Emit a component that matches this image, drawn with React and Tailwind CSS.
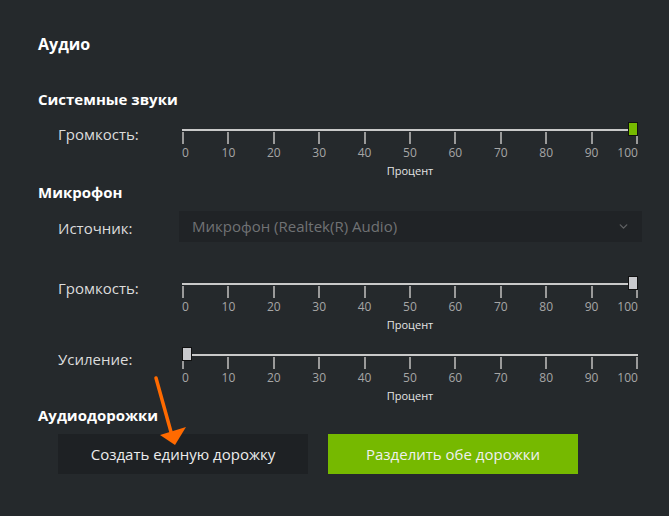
import React from "react";
import { ChevronDown } from "lucide-react";

const ticks = [0, 10, 20, 30, 40, 50, 60, 70, 80, 90, 100];

const Slider = ({ value, green }) => {
  return (
    <div className="w-[456px] pt-[5px]">
      <div className="relative h-[2px] bg-[#c9c9c9]">
        <div
          className={`absolute top-[-7px] w-[10px] h-[14px] border border-[#111] ${
            value === 100 ? "right-0" : "left-0"
          } ${green ? "bg-[#76b900]" : "bg-[#c8c9cd]"}`}
        />
      </div>
      <div className="mt-[1px] flex justify-between">
        {ticks.map((t, i) => (
          <div
            key={t}
            className={`w-[2px] flex flex-col ${
              i === 0 ? "items-start" : i === ticks.length - 1 ? "items-end" : "items-center"
            }`}
          >
            <div className="w-[2px] h-3 bg-[#9a9a9a]" />
            <span className="mt-[2px] text-[12px] leading-[14px] text-[#a6a6a6] whitespace-nowrap">
              {t}
            </span>
          </div>
        ))}
      </div>
      <div className="mt-[4px] text-center text-[11px] leading-[14px] text-[#e4e4e4]">
        Процент
      </div>
    </div>
  );
};

const Row = ({ label, children, className = "" }) => (
  <div className={`flex items-start ${className}`}>
    <div className="w-[144px] pl-5 text-[15px] leading-[21px] text-[#dcdcdc]">{label}</div>
    {children}
  </div>
);

const App = () => {
  return (
    <div
      className="relative w-[669px] h-[516px] bg-[#25292c] pl-[38px] pt-[33px] overflow-hidden"
      style={{ fontFamily: '"Open Sans", "Noto Sans", sans-serif' }}
    >
      <h1 className="text-[16px] leading-[22px] font-bold text-white">Аудио</h1>

      <h2 className="mt-[34px] text-[15px] leading-[20px] font-bold text-white">Системные звуки</h2>
      <Row label="Громкость:" className="mt-[15px]">
        <Slider value={100} green />
      </Row>

      <h2 className="mt-[4px] text-[15px] leading-[20px] font-bold text-white">Микрофон</h2>
      <div className="mt-[9px] flex items-center">
        <div className="w-[141px] pl-5 text-[15px] leading-[21px] text-[#dcdcdc] pt-[4px]">Источник:</div>
        <div className="w-[463px] h-[31px] bg-[#202326] flex items-center justify-between pl-[13px] pr-[12px]">
          <span className="text-[15px] text-[#707274]">Микрофон (Realtek(R) Audio)</span>
          <ChevronDown size={13} strokeWidth={2.5} className="text-[#5f6163]" />
        </div>
      </div>

      <Row label="Громкость:" className="mt-[36px]">
        <Slider value={100} />
      </Row>

      <Row label="Усиление:" className="mt-[17px]">
        <Slider value={0} />
      </Row>

      <h2 className="mt-[2px] text-[15px] leading-[20px] font-bold text-white">Аудиодорожки</h2>
      <div className="mt-[9px] ml-5 flex gap-5">
        <button className="w-[250px] h-10 bg-[#1e2124] text-[15px] text-[#ececec]">
          Создать единую дорожку
        </button>
        <button className="w-[250px] h-10 bg-[#76b900] text-[15px] text-[#f0f0f0]">
          Разделить обе дорожки
        </button>
      </div>

      <svg
        className="absolute left-0 top-0 pointer-events-none"
        width="669"
        height="516"
        viewBox="0 0 669 516"
      >
        <line x1="156" y1="378" x2="171" y2="432" stroke="#ff6a00" strokeWidth="3.5" strokeLinecap="round" />
        <polygon points="160,435 186,427 175,445" fill="#ff6a00" />
      </svg>
    </div>
  );
};

export default App;
